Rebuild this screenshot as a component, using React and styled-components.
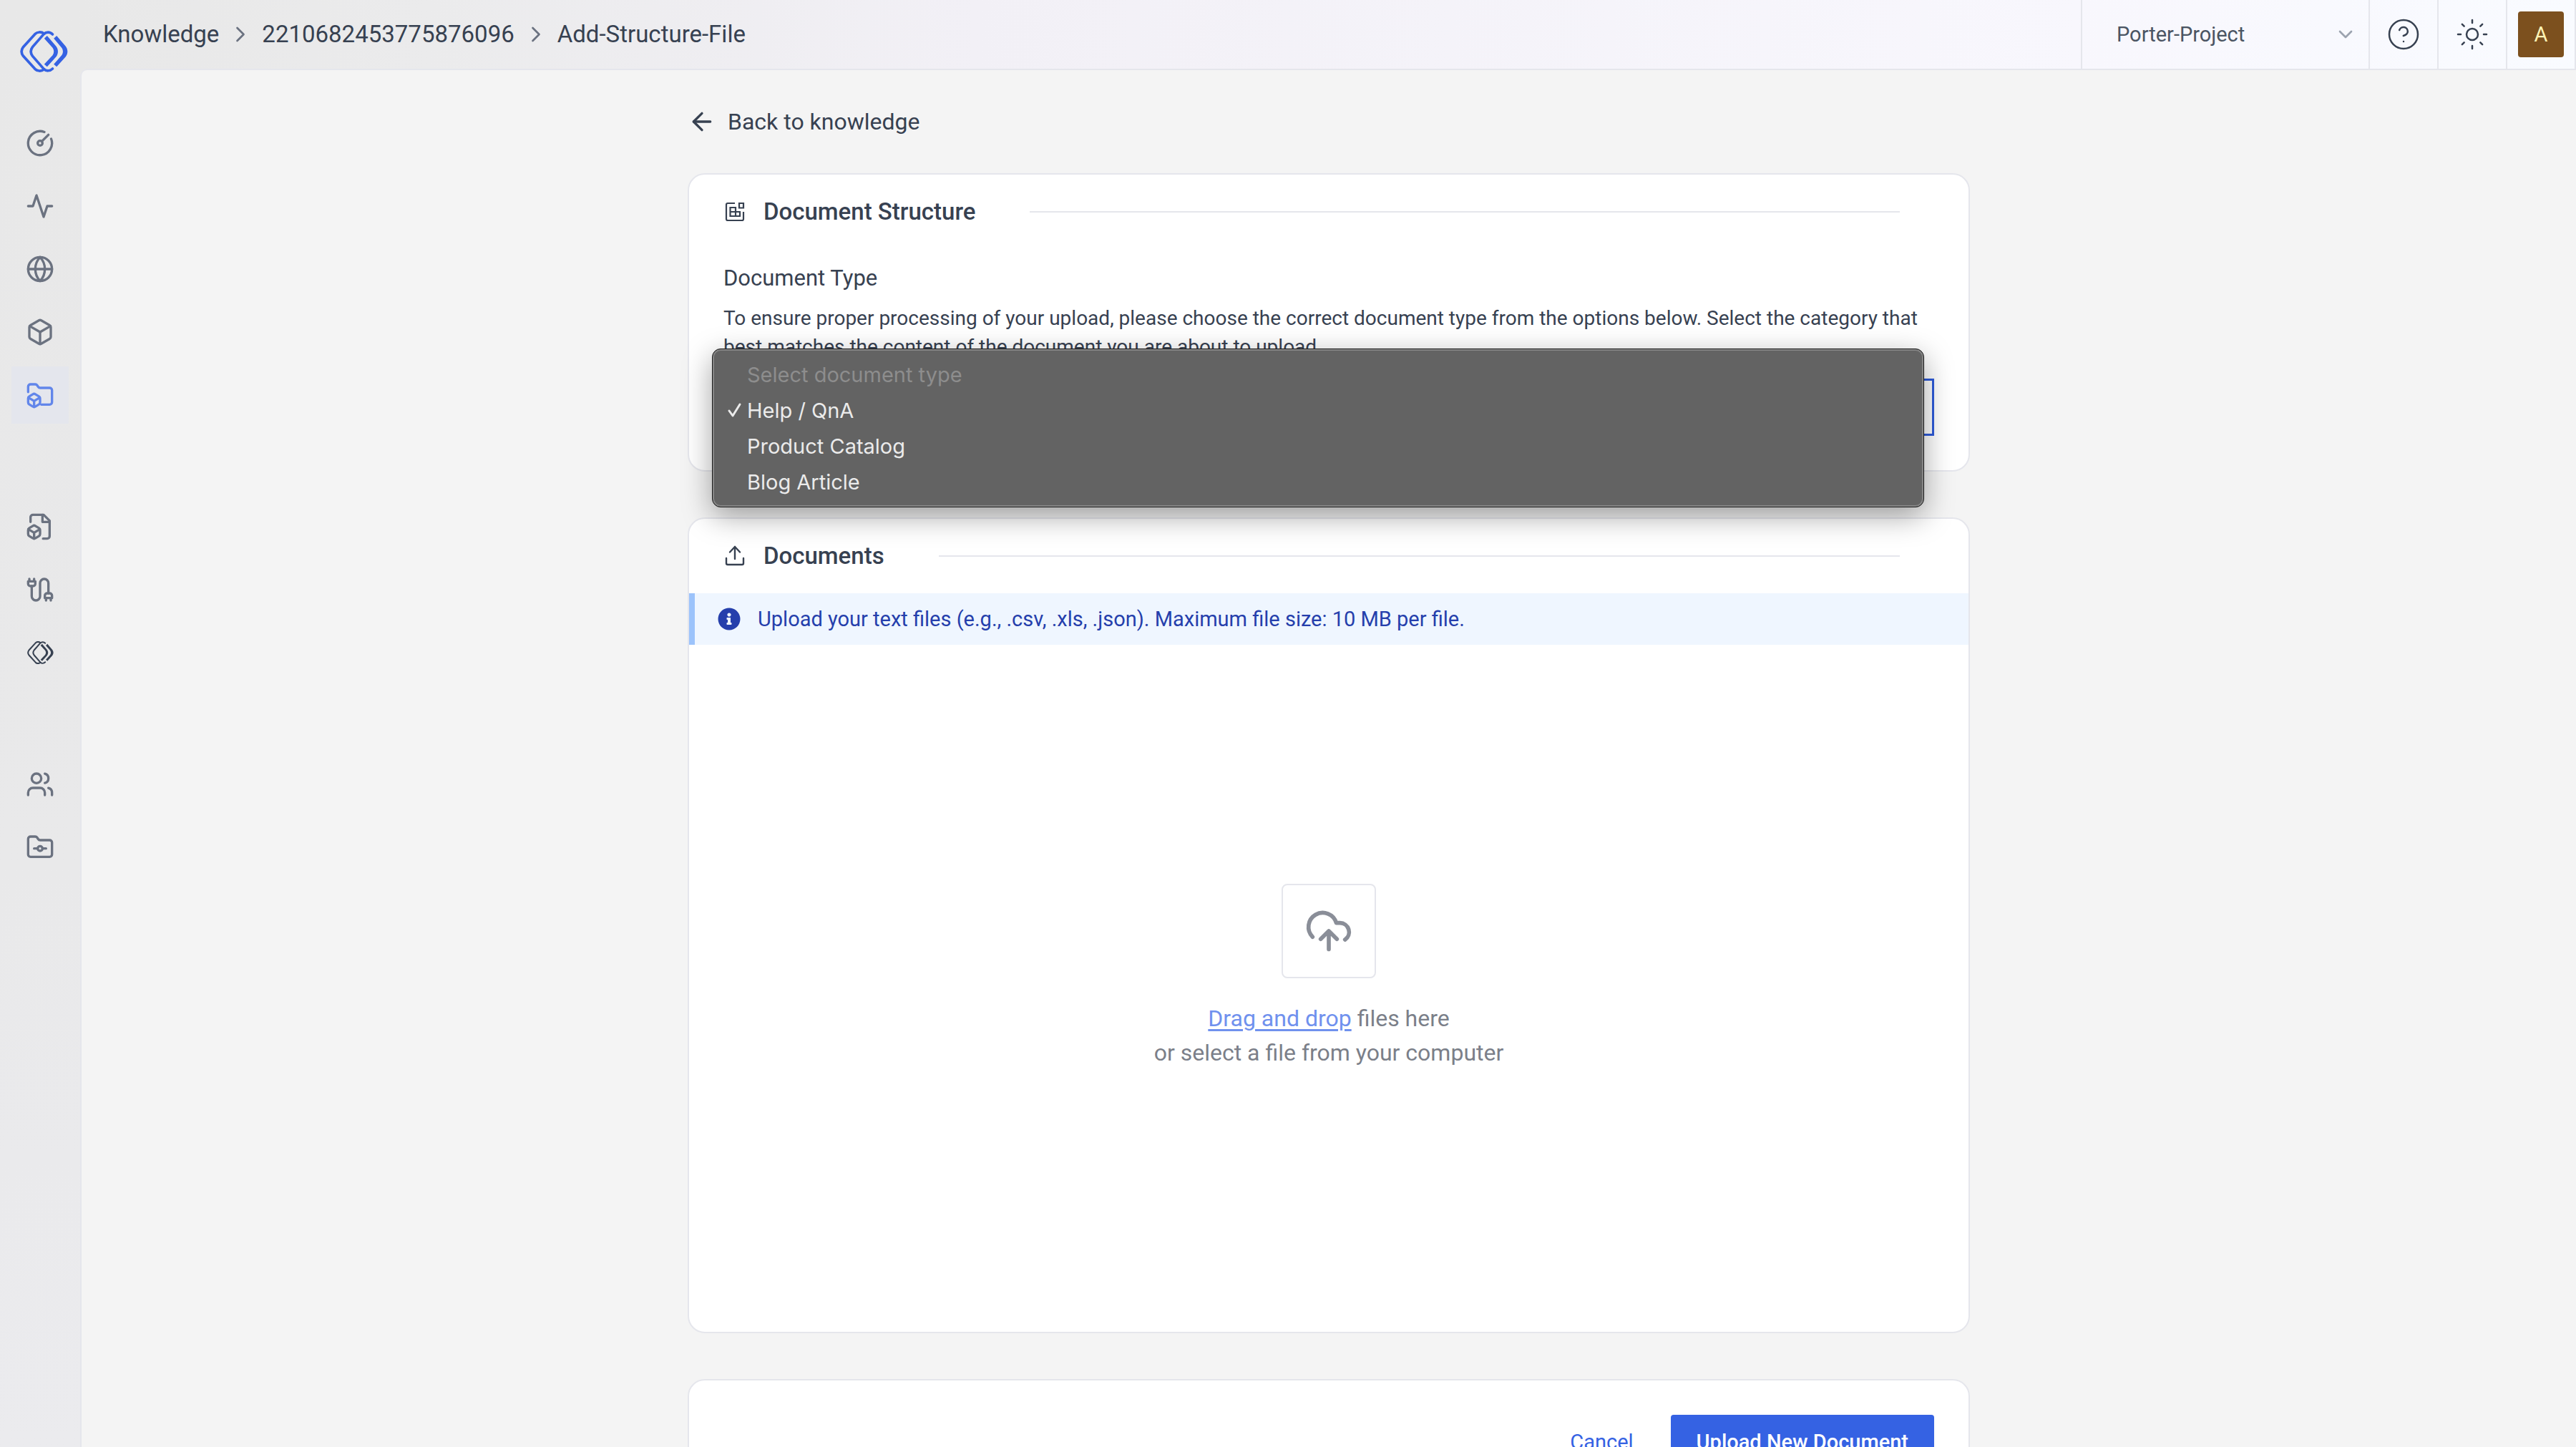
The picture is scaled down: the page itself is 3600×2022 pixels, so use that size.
import React from "react";
import styled, { createGlobalStyle, css } from "styled-components";
import {
  ArrowLeft,
  Box,
  ChevronDown,
  ChevronRight,
  FolderGit,
  Globe,
  Sun,
} from "lucide-react";
import { FaInfoCircle } from "react-icons/fa";

const color = {
  ink: "#374151",
  muted: "#6b7280",
  line: "#e5e6ec",
  page: "#f4f4f4",
  blue: "#3562e3",
};

const GlobalStyle = createGlobalStyle`
  *, *::before, *::after { box-sizing: border-box; }
  body {
    margin: 0;
    font-family: Roboto, "Liberation Sans", sans-serif;
    color: ${color.ink};
    background: ${color.page};
  }
  button, select, input { font: inherit; color: inherit; }
  svg { display: block; flex: none; }
`;

/* ---------- shell ---------- */

const Shell = styled.div`
  display: flex;
  height: 100vh;
  overflow: hidden;
`;

const Sidebar = styled.nav`
  flex: none;
  width: 112px;
  padding: 42px 16px;
  background: linear-gradient(180deg, #e8e8e8, #e9e9ea 60%, #ebebee);
`;

const LogoLink = styled.a`
  display: flex;
  align-items: center;
  height: 60px;
  margin-bottom: 58px;
  padding-left: 12px;
  color: ${color.blue};
`;

const NavGroup = styled.ul`
  display: flex;
  flex-direction: column;
  gap: 8px;
  margin: 0 0 104px;
  padding: 0;
  list-style: none;
`;

const NavLink = styled.a`
  display: flex;
  align-items: center;
  justify-content: center;
  height: 80px;
  color: ${(p) => (p.$dark ? color.ink : color.muted)};
  ${(p) =>
    p.$active &&
    css`
      color: #6286ea;
      background: #e4e6ed;
    `}
`;

const Column = styled.div`
  flex: 1;
  min-width: 0;
  display: flex;
  flex-direction: column;
  background: linear-gradient(90deg, #e8e8e8, #ebebec 14%, #f2f0f6 36%, #f8f7fd 80%, #f9fbff);
`;

const Header = styled.header`
  flex: none;
  display: flex;
  justify-content: space-between;
  height: 96px;
  padding-left: 32px;
`;

const Crumbs = styled.ol`
  display: flex;
  align-items: center;
  margin: 0;
  padding: 0;
  list-style: none;
  font-size: 33px;
  line-height: 48px;
`;

const Crumb = styled.li`
  display: flex;
  align-items: center;
  a { color: inherit; text-decoration: none; }
  svg { margin: 0 12px; color: ${color.muted}; }
`;

const Tools = styled.div`
  display: flex;
  border-right: 2px solid ${color.line};
`;

const ProjectPicker = styled.label`
  display: grid;
  align-items: center;
  width: 402px;
  border-left: 2px solid ${color.line};
  font-size: 29px;
  color: #4b5563;
  > * { grid-area: 1 / 1; }
  select {
    width: 100%;
    height: 100%;
    padding: 0 64px 0 48px;
    border: 0;
    background: none;
    appearance: none;
  }
  svg { justify-self: end; margin-right: 16px; color: #9ca3af; pointer-events: none; }
`;

const ToolCell = styled.div`
  display: grid;
  place-items: center;
  width: 96px;
  border-left: 2px solid ${color.line};
`;

const ToolButton = styled.button`
  display: grid;
  place-items: center;
  width: 64px;
  height: 64px;
  padding: 0;
  border: 0;
  border-radius: 4px;
  font-size: 29px;
  color: ${(p) => (p.$avatar ? "#fef3b5" : color.ink)};
  background: ${(p) => (p.$avatar ? "#7c501e" : "none")};
`;

const Main = styled.main`
  flex: 1;
  min-height: 0;
  overflow-y: auto;
  scrollbar-width: none;
  border-top: 2px solid ${color.line};
  border-left: 2px solid ${color.line};
  border-top-left-radius: 10px;
  background: ${color.page};
`;

const Content = styled.div`
  max-width: 1792px;
  margin: 0 auto;
  padding: 48px 0;
`;

const BackLink = styled.a`
  display: flex;
  align-items: center;
  gap: 16px;
  margin-bottom: 48px;
  font-size: 32px;
  line-height: 48px;
  color: inherit;
  text-decoration: none;
`;

/* ---------- cards ---------- */

const Card = styled.section`
  margin-bottom: 64px;
  border: 2px solid ${color.line};
  border-radius: 24px;
  background: #fff;
`;

const CardHeader = styled.div`
  display: flex;
  align-items: center;
  padding: 28px 96px 28px 48px;
`;

const CardTitle = styled.h2`
  margin: 0 76px 0 24px;
  font-size: 33px;
  font-weight: 500;
  line-height: 48px;
`;

const Rule = styled.div`
  flex: 1;
  height: 2px;
  background: ${color.line};
`;

const CardBody = styled.div`
  padding: 20px 48px 48px;
`;

const FieldLabel = styled.label`
  display: block;
  font-size: 31px;
  line-height: 42px;
`;

const FieldHint = styled.p`
  margin: 15px 0 24px;
  font-size: 28px;
  line-height: 40px;
`;

const SelectField = styled.div`
  position: relative;
`;

const TypeSelect = styled.select`
  display: block;
  width: 100%;
  height: 80px;
  padding: 0 32px;
  border: 3px solid #2f5cdb;
  border-radius: 0;
  outline: none;
  background: #fff;
  font-size: 29px;
  appearance: none;
`;

const Menu = styled.ul`
  position: absolute;
  top: -42px;
  left: -16px;
  right: 14px;
  margin: 0;
  padding: 10px 20px;
  list-style: none;
  border: 1px solid #1c1c1c;
  border-radius: 12px;
  background: #636363;
  box-shadow: inset 0 0 0 2px #858585, 0 12px 40px rgba(0, 0, 0, 0.36);
`;

const MenuItem = styled.li`
  display: flex;
  align-items: center;
  height: 50px;
  font-family: Inter, "Liberation Sans", sans-serif;
  font-size: 29px;
  color: ${(p) => (p.$disabled ? "#8d8d8d" : "#ebebeb")};
`;

const MenuMark = styled.span`
  flex: none;
  width: 28px;
`;

const Notice = styled.p`
  display: flex;
  align-items: center;
  gap: 24px;
  height: 72px;
  margin: 0;
  padding-left: 32px;
  border-left: 8px solid #9cc3fb;
  background: #eff6ff;
  font-size: 29px;
  color: #253fac;
`;

const DropZone = styled.div`
  display: flex;
  flex-direction: column;
  align-items: center;
  justify-content: center;
  gap: 32px;
  height: 960px;
  padding-bottom: 32px;
`;

const DropIcon = styled.div`
  display: grid;
  place-items: center;
  width: 132px;
  height: 132px;
  border: 2px solid ${color.line};
  border-radius: 8px;
  color: #8a8e98;
`;

const DropText = styled.p`
  margin: 0;
  font-size: 32px;
  line-height: 48px;
  text-align: center;
  color: #7b7f89;
  a {
    color: #7091ee;
    text-decoration-thickness: 3px;
    text-underline-offset: 4px;
  }
`;

const Actions = styled.div`
  display: flex;
  align-items: center;
  justify-content: flex-end;
  gap: 16px;
  padding: 48px;
`;

const Button = styled.button`
  height: 76px;
  padding: 0 36px;
  border: 0;
  border-radius: 4px;
  font-size: 29px;
  font-weight: ${(p) => (p.$primary ? 500 : 400)};
  color: ${(p) => (p.$primary ? "#fff" : color.blue)};
  background: ${(p) => (p.$primary ? color.blue : "none")};
`;

/* ---------- drawings ---------- */

const Line = ({ size = 40, width = 2, children }) => (
  <svg
    width={size}
    height={size}
    viewBox="0 0 24 24"
    fill="none"
    stroke="currentColor"
    strokeWidth={width}
    strokeLinecap="round"
    strokeLinejoin="round"
    aria-hidden="true"
  >
    {children}
  </svg>
);

const Logo = ({ width, height }) => (
  <svg width={width} height={height} viewBox="0 0 200 174" fill="none" aria-hidden="true">
    <g stroke="currentColor" strokeWidth="11" strokeLinecap="round">
      <path d="M100 12C88 3 72 4 62 14L13 68C4 80 4 94 13 106L62 160C72 170 88 171 100 162" />
      <path d="M136 15C125 3 109 4 99 14L52 68C43 80 43 94 52 106L99 160C109 170 125 170 136 159" />
    </g>
    <g fill="currentColor">
      <path d="M113 21L151 65C161 79 161 95 151 109L113 151L101 140L136 103C143 93 143 81 136 71L101 32Z" />
      <path d="M153 21L191 65C201 79 201 95 191 109L153 151L141 140L174 103C181 93 181 81 174 71L141 32Z" />
    </g>
  </svg>
);

const Gauge = () => (
  <Line>
    <path d="M15.6 2.7a10 10 0 1 0 5.7 5.7" />
    <circle cx="12" cy="12" r="2" />
    <path d="M13.4 10.6 19 5" />
  </Line>
);

const Pulse = () => (
  <Line>
    <path d="M22 12h-4l-3 9L9 3l-3 9H2" />
  </Line>
);

const Cube = () => (
  <>
    <path d="M2.97 13.12c-.6.36-.97 1.02-.97 1.74v3.28c0 .72.37 1.38.97 1.74l3 1.83c.63.39 1.43.39 2.06 0l3-1.83c.6-.36.97-1.02.97-1.74v-3.28c0-.72-.37-1.38-.97-1.74l-3-1.83a1.97 1.97 0 0 0-2.06 0l-3 1.83Z" />
    <path d="m7 17-4.74-2.85M7 17l4.74-2.85M7 17v5" />
  </>
);

const FolderCube = () => (
  <Line>
    <path d="M2 9.5V5a2 2 0 0 1 2-2h3.9a2 2 0 0 1 1.69.9l.81 1.2a2 2 0 0 0 1.67.9H20a2 2 0 0 1 2 2v10a2 2 0 0 1-2 2h-7" />
    <Cube />
  </Line>
);

const FileCube = () => (
  <Line>
    <path d="M14.5 22H18a2 2 0 0 0 2-2V7l-5-5H6a2 2 0 0 0-2 2v4" />
    <path d="M14 2v6h6" />
    <Cube />
  </Line>
);

const Plugs = () => (
  <Line>
    <path d="M4 9a2 2 0 0 1-2-2V5h6v2a2 2 0 0 1-2 2ZM3 5V3M7 5V3" />
    <path d="M19 15V6.5a3.5 3.5 0 0 0-7 0v11a3.5 3.5 0 0 1-7 0V9" />
    <path d="M17 21v-2M21 21v-2M22 19h-6v-2a2 2 0 0 1 2-2h2a2 2 0 0 1 2 2Z" />
  </Line>
);

const People = () => (
  <Line>
    <path d="M16 21v-2a4 4 0 0 0-4-4H6a4 4 0 0 0-4 4v2" />
    <circle cx="9" cy="7" r="4" />
    <path d="M22 21v-2a4 4 0 0 0-3-3.87M16 3.13a4 4 0 0 1 0 7.75" />
  </Line>
);

const Help = () => (
  <Line size={48} width={1.25}>
    <circle cx="12" cy="12" r="10" />
    <path d="M9.09 9a3 3 0 0 1 5.83 1c0 2-3 3-3 3M12 17h.01" />
  </Line>
);

const CloudUp = () => (
  <Line size={68}>
    <path d="M4 14.899A7 7 0 1 1 15.71 8h1.79a4.5 4.5 0 0 1 2.5 8.242" />
    <path d="M12 12v9M16 16l-4-4-4 4" />
  </Line>
);

const StructureIcon = () => (
  <svg width="32" height="32" viewBox="0 0 32 32" fill="none" stroke="currentColor" strokeWidth="2.2" aria-hidden="true">
    <path d="M16 4H6a2 2 0 0 0-2 2v20a2 2 0 0 0 2 2h20a2 2 0 0 0 2-2V16" />
    <path d="M22 4h6v6.500h-6z" />
    <path d="M9.500 10h7.500v12H9.500zM9.500 16H23v6H9.500z" />
  </svg>
);

const TrayUpIcon = () => (
  <svg width="32" height="32" viewBox="0 0 32 32" fill="none" stroke="currentColor" strokeWidth="2.400" aria-hidden="true">
    <path d="M4 19v7a2 2 0 0 0 2 2h20a2 2 0 0 0 2-2v-7" strokeLinecap="round" />
    <path d="M16 3v17M9 10.500L16 3l7 7.500" strokeLinecap="round" strokeLinejoin="round" />
  </svg>
);

const CheckMark = () => (
  <svg width="22" height="22" viewBox="0 0 22 22" fill="none" stroke="currentColor" strokeWidth="3" strokeLinecap="round" strokeLinejoin="round" aria-hidden="true">
    <path d="M3 12l5 7L18 3" />
  </svg>
);

/* ---------- data ---------- */

const navGroups = [
  [
    { name: "Dashboard", icon: <Gauge /> },
    { name: "Activity", icon: <Pulse /> },
    { name: "Web", icon: <Globe size={40} /> },
    { name: "Models", icon: <Box size={40} /> },
    { name: "Knowledge", icon: <FolderCube />, active: true },
  ],
  [
    { name: "Files", icon: <FileCube /> },
    { name: "Integrations", icon: <Plugs /> },
    { name: "Workspace", icon: <Logo width={37} height={32} />, dark: true },
  ],
  [
    { name: "Users", icon: <People /> },
    { name: "Projects", icon: <FolderGit size={40} /> },
  ],
];

const crumbs = ["Knowledge", "2210682453775876096", "Add-Structure-File"];

const documentTypes = [
  { label: "Select document type", disabled: true },
  { label: "Help / QnA", selected: true },
  { label: "Product Catalog" },
  { label: "Blog Article" },
];

/* ---------- page ---------- */

function SideNav() {
  return (
    <Sidebar aria-label="Main">
      <LogoLink href="#" aria-label="Home">
        <Logo width={67} height={58} />
      </LogoLink>
      {navGroups.map((group, i) => (
        <NavGroup key={i}>
          {group.map((item) => (
            <li key={item.name}>
              <NavLink href="#" aria-label={item.name} $active={item.active} $dark={item.dark}>
                {item.icon}
              </NavLink>
            </li>
          ))}
        </NavGroup>
      ))}
    </Sidebar>
  );
}

function TopBar() {
  return (
    <Header>
      <Crumbs>
        {crumbs.map((name, i) => (
          <Crumb key={name}>
            {i > 0 && <ChevronRight size={36} strokeWidth={1.8} />}
            <a href="#">{name}</a>
          </Crumb>
        ))}
      </Crumbs>
      <Tools>
        <ProjectPicker>
          <select aria-label="Project" defaultValue="Porter-Project">
            <option>Porter-Project</option>
          </select>
          <ChevronDown size={32} strokeWidth={2} />
        </ProjectPicker>
        <ToolCell>
          <ToolButton aria-label="Help">
            <Help />
          </ToolButton>
        </ToolCell>
        <ToolCell>
          <ToolButton aria-label="Theme">
            <Sun size={48} strokeWidth={1.25} />
          </ToolButton>
        </ToolCell>
        <ToolCell>
          <ToolButton $avatar>A</ToolButton>
        </ToolCell>
      </Tools>
    </Header>
  );
}

function StructureCard() {
  return (
    <Card>
      <CardHeader>
        <StructureIcon />
        <CardTitle>Document Structure</CardTitle>
        <Rule />
      </CardHeader>
      <CardBody>
        <FieldLabel htmlFor="document-type">Document Type</FieldLabel>
        <FieldHint>
          To ensure proper processing of your upload, please choose the correct document type from
          the options below. Select the category that best matches the content of the document you
          are about to upload.
        </FieldHint>
        <SelectField>
          <TypeSelect id="document-type" defaultValue="Help / QnA">
            {documentTypes.map((type) => (
              <option key={type.label} disabled={type.disabled}>
                {type.label}
              </option>
            ))}
          </TypeSelect>
          <Menu role="listbox" aria-label="Document Type">
            {documentTypes.map((type) => (
              <MenuItem
                key={type.label}
                role="option"
                aria-selected={Boolean(type.selected)}
                aria-disabled={type.disabled}
                $disabled={type.disabled}
              >
                <MenuMark>{type.selected && <CheckMark />}</MenuMark>
                {type.label}
              </MenuItem>
            ))}
          </Menu>
        </SelectField>
      </CardBody>
    </Card>
  );
}

function DocumentsCard() {
  return (
    <Card>
      <CardHeader>
        <TrayUpIcon />
        <CardTitle>Documents</CardTitle>
        <Rule />
      </CardHeader>
      <Notice>
        <FaInfoCircle size={32} />
        Upload your text files (e.g., .csv, .xls, .json). Maximum file size: 10 MB per file.
      </Notice>
      <DropZone>
        <DropIcon>
          <CloudUp />
        </DropIcon>
        <DropText>
          <a href="#">Drag and drop</a> files here
          <br />
          or select a file from your computer
        </DropText>
      </DropZone>
    </Card>
  );
}

export default function App() {
  return (
    <>
      <GlobalStyle />
      <Shell>
        <SideNav />
        <Column>
          <TopBar />
          <Main>
            <Content>
              <BackLink href="#">
                <ArrowLeft size={40} />
                Back to knowledge
              </BackLink>
              <StructureCard />
              <DocumentsCard />
              <Card>
                <Actions>
                  <Button>Cancel</Button>
                  <Button $primary>Upload New Document</Button>
                </Actions>
              </Card>
            </Content>
          </Main>
        </Column>
      </Shell>
    </>
  );
}
